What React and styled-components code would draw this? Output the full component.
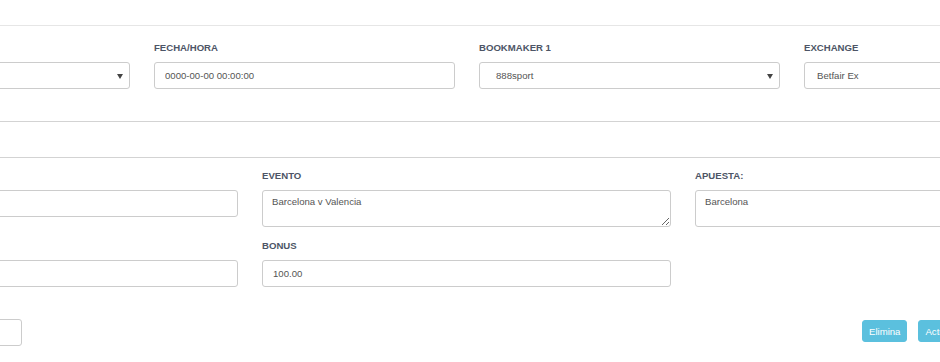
import React from 'react';
import styled, { createGlobalStyle } from 'styled-components';

const GlobalStyle = createGlobalStyle`
  html, body {
    margin: 0;
    padding: 0;
    background: #ffffff;
    overflow: hidden;
  }
  body {
    font-family: "Liberation Sans", Arial, sans-serif;
  }
`;

const Page = styled.div`
  width: 940px;
  height: 362px;
  overflow: hidden;
  background: #fff;
`;

const TopBar = styled.div`
  height: 25px;
  border-bottom: 1px solid #e6e6e6;
`;

/* the form is scrolled sideways, so its left column starts off screen */
const Form = styled.div`
  margin-left: -171px;
  width: 1276px;
`;

const Section = styled.div`
  padding: ${({ $pad }) => $pad || '0'};
  height: ${({ $height }) => ($height ? `${$height}px` : 'auto')};
  border-bottom: ${({ $line }) => ($line ? '1px solid #d3d3d3' : 'none')};
`;

const Grid = styled.div`
  display: grid;
  grid-template-columns: repeat(${({ $cols }) => $cols}, ${({ $colWidth }) => $colWidth}px);
  column-gap: 24px;
  row-gap: 13px;
  align-items: start;
`;

const Field = styled.div`
  display: flex;
  flex-direction: column;
`;

const Label = styled.label`
  display: block;
  height: 12px;
  line-height: 12px;
  margin-bottom: 8px;
  font-size: 9.6px;
  font-weight: 700;
  color: #4d5566;
  text-transform: uppercase;
`;

const Input = styled.input`
  box-sizing: border-box;
  width: ${({ $width }) => ($width ? `${$width}px` : '100%')};
  height: 27px;
  margin: 0;
  padding: 0 10px;
  border: 1px solid #cccccc;
  border-radius: 3px;
  background: #fff;
  font-family: "Liberation Sans", Arial, sans-serif;
  font-size: 9.6px;
  color: #555;
  outline: none;
`;

const TextArea = styled.textarea`
  box-sizing: border-box;
  width: 100%;
  height: 37px;
  margin: 0;
  padding: 5px 9px;
  border: 1px solid #cccccc;
  border-radius: 3px;
  background: #fff;
  font-family: "Liberation Sans", Arial, sans-serif;
  font-size: 9.6px;
  line-height: 12px;
  color: #555;
  resize: both;
  outline: none;
  display: block;
`;

const SelectBox = styled.div`
  box-sizing: border-box;
  height: 27px;
  display: flex;
  align-items: center;
  justify-content: space-between;
  padding: 0 6px 0 ${({ $padLeft }) => $padLeft || 16}px;
  border: 1px solid #cccccc;
  border-radius: 3px;
  background: #fff;
  font-size: 9.6px;
  color: #555;
`;

const Caret = () => (
  <svg width="6" height="6" viewBox="0 0 6 6">
    <path d="M0 1 L6 1 L3 6 Z" fill="#444" />
  </svg>
);

const BottomRow = styled.div`
  display: flex;
  align-items: flex-start;
  padding-top: 32px;
`;

const Buttons = styled.div`
  display: flex;
  gap: 11px;
  margin-left: 840px;
  padding-top: 1px;
`;

const Button = styled.button`
  height: 22px;
  padding: 0 6px;
  border: 1px solid #5bc0de;
  border-radius: 3px;
  background: #5bc0de;
  color: #fff;
  font-family: "Liberation Sans", Arial, sans-serif;
  font-size: 9.6px;
  cursor: pointer;
`;

function Select({ value, padLeft, caret = true }) {
  return (
    <SelectBox $padLeft={padLeft}>
      <span>{value}</span>
      {caret && <Caret />}
    </SelectBox>
  );
}

export default function App() {
  return (
    <Page>
      <GlobalStyle />
      <TopBar />
      <Form>
        <Section $pad="16px 0 32px" $line>
          <Grid $cols={4} $colWidth={301}>
            <Field>
              <Label />
              <Select value="" />
            </Field>
            <Field>
              <Label>Fecha/Hora</Label>
              <Input defaultValue="0000-00-00 00:00:00" />
            </Field>
            <Field>
              <Label>Bookmaker 1</Label>
              <Select value="888sport" />
            </Field>
            <Field>
              <Label>Exchange</Label>
              <Select value="Betfair Ex" padLeft={12} />
            </Field>
          </Grid>
        </Section>

        <Section $height={35} $line />

        <Section $pad="12px 0 0">
          <Grid $cols={3} $colWidth={409}>
            <Field>
              <Label />
              <Input defaultValue="" />
            </Field>
            <Field>
              <Label>Evento</Label>
              <TextArea defaultValue="Barcelona v Valencia" />
            </Field>
            <Field>
              <Label>Apuesta:</Label>
              <TextArea defaultValue="Barcelona" />
            </Field>
            <Field>
              <Label />
              <Input defaultValue="" />
            </Field>
            <Field>
              <Label>Bonus</Label>
              <Input defaultValue="100.00" />
            </Field>
          </Grid>
          <BottomRow>
            <Input $width={193} defaultValue="" />
            <Buttons>
              <Button>Elimina</Button>
              <Button>Actualiza</Button>
            </Buttons>
          </BottomRow>
        </Section>
      </Form>
    </Page>
  );
}
